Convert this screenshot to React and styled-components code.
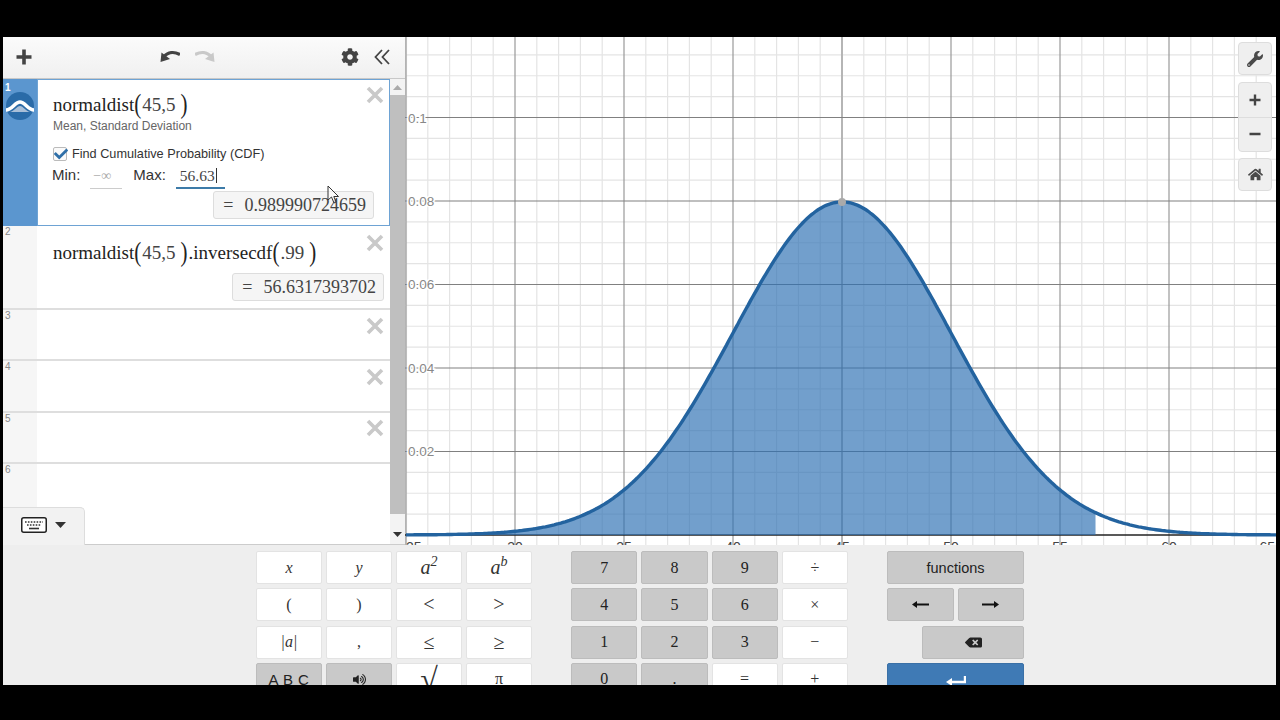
import styled, { createGlobalStyle } from 'styled-components'
import { FaCog, FaHome, FaWrench, FaVolumeUp, FaBackspace, FaCheck } from 'react-icons/fa'

const Global = createGlobalStyle`
    html, body { margin: 0; padding: 0; background: #000; }
    * { box-sizing: border-box; }
`
const Screen = styled.div`
    width: 1280px;
    height: 720px;
    background: #000;
    padding: 37px 4px 35px 3px;
    overflow: hidden;
    font-family: "Liberation Sans", Arial, sans-serif;
`
const Frame = styled.div`
    position: relative;
    display: grid;
    grid-template-rows: 508px 140px;
    height: 648px;
    overflow: hidden;
`
const Top = styled.div`
    display: grid;
    grid-template-columns: 402px 871px;
    min-height: 0;
`
const Side = styled.div`
    position: relative;
    display: grid;
    grid-template-rows: 42px 466px;
    border-right: 1px solid #ccc;
`
const Toolbar = styled.div`
    display: flex;
    align-items: center;
    padding: 0 13px 2px 12px;
    background: linear-gradient(#fbfbfb, #f0f0f0);
    border-bottom: 1px solid #c8c8c8;
`
const ToolIcon = styled.span`
    display: flex;
    margin-left: ${p => p.$gap || 0}px;
    color: ${p => p.$color || '#444'};
    transform: ${p => p.$flip ? 'scaleX(-1)' : 'none'};
`
const ListWrap = styled.div`
    display: grid;
    grid-template-columns: 387px 15px;
    min-height: 0;
    border-bottom: 1px solid #ccc;
`
const List = styled.div`
    display: flex;
    flex-direction: column;
    overflow: hidden;
`
const Row = styled.div`
    position: relative;
    display: flex;
    flex: none;
    height: ${p => p.$h}px;
    border-bottom: ${p => p.$active ? 'none' : '2px solid #dedede'};
`
const Gutter = styled.div`
    flex: none;
    width: 34px;
    padding: ${p => p.$active ? '3px' : '0'} 0 0 2px;
    font-size: 10px;
    color: ${p => p.$active ? '#fff' : '#888'};
    background: ${p => p.$active ? '#5b96cf' : '#f6f6f6'};
    font-weight: ${p => p.$active ? 700 : 400};
`
const Badge = styled.svg`
    display: block;
    margin: -1px 0 0 1px;
`
const Body = styled.div`
    flex: 1;
    display: flex;
    flex-direction: column;
    align-items: flex-start;
    padding: ${p => p.$top}px 0 0 ${p => p.$active ? 15 : 16}px;
    background: #fff;
    border: ${p => p.$active ? '1px solid #6ea3d4' : 'none'};
`
const Math = styled.div`
    font-family: "Liberation Serif", "Times New Roman", serif;
    font-size: 19px;
    line-height: 24px;
    color: #222;
    white-space: nowrap;
`
const Paren = styled.span`
    display: inline-block;
    font-size: 21px;
    line-height: 20px;
    padding: ${p => p.$close ? '0 1px 0 5px' : '0 1px 0 0'};
    transform: scaleY(1.25);
`
const Num = styled.span`
    color: #444;
`
const Hint = styled.div`
    margin-top: 2px;
    font-size: 12px;
    line-height: 15px;
    color: #666;
`
const CheckRow = styled.label`
    display: flex;
    align-items: center;
    gap: 5px;
    margin-top: 12px;
    font-size: 12.7px;
    line-height: 16px;
    color: #333;
`
const Box = styled.span`
    position: relative;
    display: block;
    width: 14px;
    height: 14px;
    border: 1px solid #bbb;
    border-radius: 2px;
    background: #fafafa;
    color: #2f6fa8;
    svg { position: absolute; left: 0; top: -1px; }
`
const Bounds = styled.div`
    display: flex;
    align-items: flex-start;
    margin: 3px 0 0 -1px;
    height: 24px;
    font-size: 15px;
    line-height: 20px;
    color: #333;
`
const BoundInput = styled.span`
    display: block;
    width: ${p => p.$w}px;
    height: 24px;
    margin: 0 ${p => p.$after}px 0 ${p => p.$before}px;
    padding: 1px 0 0 ${p => p.$pad}px;
    font-family: "Liberation Serif", serif;
    font-size: ${p => p.$focus ? 15.5 : 14}px;
    line-height: 20px;
    color: ${p => p.$focus ? '#444' : '#aaa'};
    border-bottom: ${p => p.$focus ? '2px solid #3d7ba8' : '1px solid #ccc'};
`
const Caret = styled.span`
    display: inline-block;
    width: 1px;
    height: 15px;
    margin-left: 1px;
    vertical-align: -2px;
    background: #333;
`
const Result = styled.div`
    align-self: flex-end;
    display: flex;
    gap: 11px;
    margin: ${p => p.$top}px ${p => p.$right}px 0 0;
    padding: 0 7px 0 9px;
    height: 28px;
    font-family: "Liberation Serif", serif;
    font-size: 18px;
    line-height: 26px;
    color: #444;
    background: #f5f5f5;
    border: 1px solid #ddd;
    border-radius: 3px;
    white-space: nowrap;
`
const Close = styled.svg`
    position: absolute;
    right: 6px;
    top: ${p => p.$top}px;
`
const Scroll = styled.div`
    display: grid;
    grid-template-rows: 16px 1fr 30px;
    background: #f3f3f3;
`
const ScrollEnd = styled.div`
    display: flex;
    justify-content: center;
    align-items: ${p => p.$down ? 'flex-end' : 'center'};
    padding-bottom: ${p => p.$down ? '7px' : '0'};
    svg { display: block; }
`
const Thumb = styled.div`
    background: #bfbfbf;
`
const KeyboardTab = styled.div`
    position: absolute;
    left: 0;
    bottom: 0;
    width: 82px;
    height: 38px;
    display: flex;
    align-items: center;
    gap: 8px;
    padding: 0 0 4px 18px;
    background: #f2f2f2;
    border: 1px solid #ddd;
    border-left: none;
    border-bottom: none;
    border-top-right-radius: 5px;
`
const Graph = styled.div`
    position: relative;
    overflow: hidden;
    background: #fff;
    box-shadow: inset 3px 0 2px -2px #ccc;
`
const Plot = styled.svg`
    display: block;
    text { font-family: "Liberation Sans", Arial, sans-serif; }
`
const GraphTools = styled.div`
    position: absolute;
    top: 5px;
    right: 4px;
    display: flex;
    flex-direction: column;
    gap: 6.5px;
`
const ToolGroup = styled.div`
    display: flex;
    flex-direction: column;
    border: 1px solid #ddd;
    border-radius: 4px;
    background: #efefef;
    overflow: hidden;
`
const ToolButton = styled.div`
    width: 32px;
    height: ${p => p.$h || 31}px;
    display: flex;
    align-items: center;
    justify-content: center;
    color: #4a4a4a;
    & + & { border-top: 1px solid #ddd; }
`
const Cursor = styled.svg`
    position: absolute;
    left: 324px;
    top: 148px;
`
const Keypad = styled.div`
    display: flex;
    gap: 39px;
    padding: 6px 0 0 253px;
    background: #eee;
    overflow: hidden;
`
const KeyGrid = styled.div`
    display: grid;
    grid-template-columns: repeat(4, ${p => p.$col}px);
    grid-auto-rows: 33px;
    gap: 4.33px 4px;
`
const tones = {
    light: 'background: #fff; border-color: #e3e3e3; color: #333;',
    dark: 'background: #c9c9c9; border-color: #bcbcbc; color: #222;',
    blue: 'background: #3f7ab5; border-color: #3a70a6; color: #fff;',
}
const Key = styled.div`
    grid-column: ${p => p.$col || 'auto'};
    display: flex;
    align-items: center;
    justify-content: center;
    border: 1px solid;
    border-radius: 2px;
    font-family: ${p => p.$sans ? '"Liberation Sans", Arial, sans-serif' : '"Liberation Serif", serif'};
    font-size: ${p => p.$size || 16}px;
    font-style: ${p => p.$italic ? 'italic' : 'normal'};
    letter-spacing: ${p => p.$spaced ? '0.5px' : 'normal'};
    ${p => tones[p.$tone || 'light']}
    sup { font-size: 14px; line-height: 0; }
`
const EnterIcon = styled.svg`
    margin-top: 6px;
`

function pdf(x) {
    return window.Math.exp(-((x - 45) ** 2) / 50) / (5 * window.Math.sqrt(2 * window.Math.PI))
}
const px = x => 437 + (x - 45) * 21.8
const py = y => 498 - y * 4175

function curve(from, to) {
    const pts = []
    for (let x = from; x < to; x += 0.1) {
        pts.push(`${px(x).toFixed(1)},${py(pdf(x)).toFixed(1)}`)
    }
    pts.push(`${px(to).toFixed(1)},${py(pdf(to)).toFixed(1)}`)
    return pts
}

function Chart() {
    const verts = []
    for (let i = 0; i <= 41; i++) verts.push(i)
    const hors = []
    for (let i = 0; i <= 24; i++) hors.push(i)
    const shade = curve(25, 56.63)
    const line = curve(25, 65)
    return (
        <Plot width="871" height="508" viewBox="0 0 871 508">
            {verts.filter(i => i % 5 !== 0).map(i => (
                <line key={i} x1={px(25 + i)} x2={px(25 + i)} y1="0" y2="508" stroke="#e4e4e4" strokeWidth="1.2" />
            ))}
            {hors.filter(i => i % 4 !== 0).map(i => (
                <line key={i} x1="0" x2="871" y1={498 - i * 20.875} y2={498 - i * 20.875} stroke="#e4e4e4" strokeWidth="1.2" />
            ))}
            {verts.filter(i => i % 5 === 0).map(i => (
                <line key={i} x1={px(25 + i)} x2={px(25 + i)} y1="0" y2="508" stroke={i === 20 ? '#b5b5b5' : '#999'} strokeWidth={i === 20 ? 2 : 1.2} />
            ))}
            {hors.filter(i => i % 4 === 0 && i > 0).map(i => (
                <line key={i} x1="0" x2="871" y1={498 - i * 20.875} y2={498 - i * 20.875} stroke="#808080" strokeWidth="1.2" />
            ))}
            <line x1="0" x2="871" y1="498" y2="498" stroke="#222" strokeWidth="1.5" />
            <polygon points={`${px(25)},498 ${shade.join(' ')} ${px(56.63)},498`} fill="#2d70b3" fillOpacity="0.67" />
            <polyline points={line.join(' ')} fill="none" stroke="#23639f" strokeWidth="3.4" />
            <circle cx={px(45)} cy={py(pdf(45))} r="4" fill="#aaa" />
            {[['0.1', 80.5], ['0.08', 164], ['0.06', 247], ['0.04', 330.5], ['0.02', 414]].map(([t, y]) => (
                <text key={t} x="3" y={y + 5} fontSize="13.5" fill="#888" stroke="#fff" strokeWidth="3" paintOrder="stroke">{t}</text>
            ))}
            {[25, 30, 35, 40, 45, 50, 55, 60, 65].map(v => (
                <text key={v} x={v === 65 ? 870 : px(v)} y="515" fontSize="14" fill="#444" textAnchor={v === 25 ? 'start' : v === 65 ? 'end' : 'middle'}>{v}</text>
            ))}
        </Plot>
    )
}

const XMark = ({ top }) => (
    <Close $top={top} width="18" height="18" viewBox="0 0 18 18">
        <path d="M2 2 L16 16 M16 2 L2 16" stroke="#c9c9c9" strokeWidth="3.6" />
    </Close>
)

const UndoArrow = () => (
    <svg width="20" height="13" viewBox="0 0 20 13">
        <path d="M0.5 12 L1.5 2.5 L10 9 Z" fill="currentColor" />
        <path d="M4 6.5 C8 2 14 1.2 20 4.5" fill="none" stroke="currentColor" strokeWidth="3.2" />
    </svg>
)

export default function App() {
    return (
        <Screen>
            <Global />
            <Frame>
                <Top>
                    <Side>
                        <Toolbar>
                            <svg width="18" height="18" viewBox="0 0 18 18">
                                <path d="M9 1.5 V16.5 M1.5 9 H16.5" stroke="#444" strokeWidth="3.6" />
                            </svg>
                            <ToolIcon $gap={127}><UndoArrow /></ToolIcon>
                            <ToolIcon $gap={15} $flip $color="#c9c9c9"><UndoArrow /></ToolIcon>
                            <ToolIcon $gap={126}><FaCog size={18} /></ToolIcon>
                            <ToolIcon $gap={15}>
                                <svg width="16" height="18" viewBox="0 0 16 18">
                                    <path d="M8 2 L1.5 9 L8 16 M15 2 L8.5 9 L15 16" fill="none" stroke="#444" strokeWidth="1.8" />
                                </svg>
                            </ToolIcon>
                        </Toolbar>
                        <ListWrap>
                            <List>
                                <Row $h={147} $active>
                                    <Gutter $active>
                                        1
                                        <Badge width="28" height="28" viewBox="0 0 28 28">
                                            <circle cx="14" cy="14" r="14" fill="#2a6ba8" />
                                            <path d="M4 20 C8 19 11 14 14 14 C17 14 20 19 24 20 Z" fill="#a9bfd8" />
                                            <path d="M0 18 C6 18 9 10 14 10 C19 10 22 18 28 18" fill="none" stroke="#fff" strokeWidth="3.6" />
                                        </Badge>
                                    </Gutter>
                                    <Body $active $top={13}>
                                        <Math>normaldist<Paren>(</Paren><Num>45,5</Num><Paren $close>)</Paren></Math>
                                        <Hint>Mean, Standard Deviation</Hint>
                                        <CheckRow>
                                            <Box><FaCheck size={14} /></Box>
                                            Find Cumulative Probability (CDF)
                                        </CheckRow>
                                        <Bounds>
                                            Min:
                                            <BoundInput $w={32} $before={10} $after={11} $pad={3}>−∞</BoundInput>
                                            Max:
                                            <BoundInput $w={49} $before={10} $after={0} $pad={4} $focus>56.63<Caret /></BoundInput>
                                        </Bounds>
                                        <Result $top={2} $right={15}><span>=</span><span>0.989990724659</span></Result>
                                    </Body>
                                    <XMark top={7} />
                                </Row>
                                <Row $h={84}>
                                    <Gutter>2</Gutter>
                                    <Body $top={15}>
                                        <Math>
                                            normaldist<Paren>(</Paren><Num>45,5</Num><Paren $close>)</Paren>.inversecdf<Paren>(</Paren><Num>.99</Num><Paren $close>)</Paren>
                                        </Math>
                                        <Result $top={8} $right={6}><span>=</span><span>56.6317393702</span></Result>
                                    </Body>
                                    <XMark top={8} />
                                </Row>
                                <Row $h={51}><Gutter>3</Gutter><Body $top={0} /><XMark top={7} /></Row>
                                <Row $h={52}><Gutter>4</Gutter><Body $top={0} /><XMark top={7} /></Row>
                                <Row $h={51}><Gutter>5</Gutter><Body $top={0} /><XMark top={6} /></Row>
                                <Row $h={82}><Gutter>6</Gutter><Body $top={0} /></Row>
                            </List>
                            <Scroll>
                                <ScrollEnd>
                                    <svg width="9" height="5" viewBox="0 0 9 5"><path d="M4.5 0 L9 5 H0 Z" fill="#aaa" /></svg>
                                </ScrollEnd>
                                <Thumb />
                                <ScrollEnd $down>
                                    <svg width="9" height="5" viewBox="0 0 9 5"><path d="M0 0 H9 L4.5 5 Z" fill="#333" /></svg>
                                </ScrollEnd>
                            </Scroll>
                        </ListWrap>
                        <KeyboardTab>
                            <svg width="26" height="16" viewBox="0 0 26 16">
                                <rect x="0.75" y="0.75" width="24.5" height="14.5" rx="2" fill="#fff" stroke="#222" strokeWidth="1.5" />
                                <path d="M4 5 H22 M6 8 H20" stroke="#333" strokeWidth="1.6" strokeDasharray="1.6 1.3" />
                                <path d="M8 11.5 H18" stroke="#333" strokeWidth="1.6" />
                            </svg>
                            <svg width="11" height="6" viewBox="0 0 11 6"><path d="M0 0 H11 L5.5 6 Z" fill="#333" /></svg>
                        </KeyboardTab>
                    </Side>
                    <Graph>
                        <Chart />
                        <GraphTools>
                            <ToolGroup>
                                <ToolButton><FaWrench size={16} /></ToolButton>
                            </ToolGroup>
                            <ToolGroup>
                                <ToolButton $h={34}>
                                    <svg width="12" height="12" viewBox="0 0 12 12"><path d="M6 0.5 V11.5 M0.5 6 H11.5" stroke="#444" strokeWidth="2.4" /></svg>
                                </ToolButton>
                                <ToolButton $h={34}>
                                    <svg width="12" height="4" viewBox="0 0 12 4"><path d="M0.5 2 H11.5" stroke="#444" strokeWidth="2.4" /></svg>
                                </ToolButton>
                            </ToolGroup>
                            <ToolGroup>
                                <ToolButton><FaHome size={15} /></ToolButton>
                            </ToolGroup>
                        </GraphTools>
                    </Graph>
                </Top>
                <Keypad>
                    <KeyGrid $col={66}>
                        <Key $italic>x</Key>
                        <Key $italic>y</Key>
                        <Key $italic $size={20}><span>a<sup>2</sup></span></Key>
                        <Key $italic $size={20}><span>a<sup>b</sup></span></Key>
                        <Key>(</Key>
                        <Key>)</Key>
                        <Key $size={20}>&lt;</Key>
                        <Key $size={20}>&gt;</Key>
                        <Key $italic>|a|</Key>
                        <Key>,</Key>
                        <Key $size={20}>≤</Key>
                        <Key $size={20}>≥</Key>
                        <Key $tone="dark" $sans $size={15} $spaced>A B C</Key>
                        <Key $tone="dark"><FaVolumeUp size={13} /></Key>
                        <Key $size={32}>√</Key>
                        <Key>π</Key>
                    </KeyGrid>
                    <KeyGrid $col={66.25}>
                        <Key $tone="dark">7</Key>
                        <Key $tone="dark">8</Key>
                        <Key $tone="dark">9</Key>
                        <Key>÷</Key>
                        <Key $tone="dark">4</Key>
                        <Key $tone="dark">5</Key>
                        <Key $tone="dark">6</Key>
                        <Key>×</Key>
                        <Key $tone="dark">1</Key>
                        <Key $tone="dark">2</Key>
                        <Key $tone="dark">3</Key>
                        <Key>−</Key>
                        <Key $tone="dark">0</Key>
                        <Key $tone="dark">.</Key>
                        <Key>=</Key>
                        <Key>+</Key>
                    </KeyGrid>
                    <KeyGrid $col={31.25}>
                        <Key $tone="dark" $sans $size={14.5} $col="span 4">functions</Key>
                        <Key $tone="dark" $col="span 2">
                            <svg width="17" height="9" viewBox="0 0 17 9"><path d="M17 4.5 H4" stroke="#111" strokeWidth="2" /><path d="M0 4.5 L5 1 V8 Z" fill="#111" /></svg>
                        </Key>
                        <Key $tone="dark" $col="span 2">
                            <svg width="17" height="9" viewBox="0 0 17 9"><path d="M0 4.5 H13" stroke="#111" strokeWidth="2" /><path d="M17 4.5 L12 1 V8 Z" fill="#111" /></svg>
                        </Key>
                        <Key $tone="dark" $col="2 / span 3"><FaBackspace size={17} color="#222" /></Key>
                        <Key $tone="blue" $col="span 4">
                            <EnterIcon width="20" height="12" viewBox="0 0 20 12"><path d="M19 0 V6 H4" fill="none" stroke="#fff" strokeWidth="2.4" /><path d="M0 6 L6 2 V10 Z" fill="#fff" /></EnterIcon>
                        </Key>
                    </KeyGrid>
                </Keypad>
                <Cursor width="14" height="20" viewBox="0 0 14 20">
                    <path d="M1 1 V15 L4.5 12 L7 18 L9 17 L6.8 11.5 L11.5 11.5 Z" fill="#fff" fillOpacity="0.6" stroke="#333" strokeWidth="1" />
                </Cursor>
            </Frame>
        </Screen>
    )
}
